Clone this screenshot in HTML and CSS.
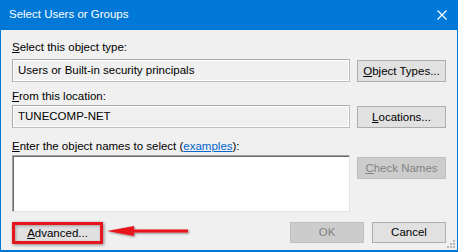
FILE: index.html
```html
<!DOCTYPE html>
<html lang="en">
<head>
    <meta charset="UTF-8">
    <title>Select Users or Groups</title>
    <link rel="stylesheet" href="styles.css">
</head>
<body>
    <div class="dialog">
        <div class="titlebar">
            <span class="title">Select Users or Groups</span>
            <svg class="close-icon" width="10" height="10" viewBox="0 0 10 10">
                <path d="M0.5 0.5 L9.5 9.5 M9.5 0.5 L0.5 9.5" stroke="#fff" stroke-width="1.2" fill="none"/>
            </svg>
        </div>

        <div class="dialog-body">
            <div class="field-label label-type"><u>S</u>elect this object type:</div>
            <div class="field-row">
                <div class="textbox">Users or Built-in security principals</div>
                <button class="btn"><u>O</u>bject Types...</button>
            </div>

            <div class="field-label label-location"><u>F</u>rom this location:</div>
            <div class="field-row">
                <div class="textbox">TUNECOMP-NET</div>
                <button class="btn"><u>L</u>ocations...</button>
            </div>

            <div class="field-label label-names"><u>E</u>nter the object names to select (<a class="link" href="#">examples</a>):</div>
            <div class="field-row">
                <div class="textarea"></div>
                <button class="btn btn-disabled"><u>C</u>heck Names</button>
            </div>

            <div class="footer">
                <button class="btn btn-advanced"><u>A</u>dvanced...</button>
                <div class="footer-right">
                    <button class="btn btn-small btn-disabled">OK</button>
                    <button class="btn btn-small">Cancel</button>
                </div>
            </div>
        </div>

        <!-- annotation arrow pointing at Advanced -->
        <svg class="arrow" width="90" height="16" viewBox="0 0 90 16">
            <defs>
                <filter id="shadow" x="-10%" y="-50%" width="120%" height="200%">
                    <feDropShadow dx="1" dy="1" stdDeviation="1.2" flood-color="#000" flood-opacity="0.45"/>
                </filter>
            </defs>
            <g filter="url(#shadow)">
                <rect x="24" y="6.5" width="58" height="3" fill="#e8141b"/>
                <polygon points="1,8 28,3 28,13" fill="#e8141b"/>
            </g>
        </svg>

        <div class="grip">
            <svg width="8" height="8" viewBox="0 0 8 8">
                <rect x="6" y="0" width="2" height="2" fill="#b8b8b8"/>
                <rect x="3" y="3" width="2" height="2" fill="#b8b8b8"/>
                <rect x="6" y="3" width="2" height="2" fill="#b8b8b8"/>
                <rect x="0" y="6" width="2" height="2" fill="#b8b8b8"/>
                <rect x="3" y="6" width="2" height="2" fill="#b8b8b8"/>
                <rect x="6" y="6" width="2" height="2" fill="#b8b8b8"/>
            </svg>
        </div>
    </div>
</body>
</html>
```

FILE: styles.css
```css
body {
    margin: 0;
    background: #f0f0f0;
    font-family: 'Segoe UI', 'Liberation Sans', Arial, sans-serif;
    font-size: 11.5px;
    color: #000;
}
.dialog {
    position: relative;
    width: 458px;
    height: 252px;
    box-sizing: border-box;
    background: #f0f0f0;
    border: 1px solid #0078d7;
    border-top: none;
    border-bottom-width: 2px;
    display: flex;
    flex-direction: column;
}
.titlebar {
    height: 30px;
    margin: 0 -1px;
    background: #0078d7;
    color: #fff;
    display: flex;
    align-items: center;
    justify-content: space-between;
    padding: 0 11px 0 9px;
    flex-shrink: 0;
}
.title {
    font-size: 11.5px;
    margin-top: -2px;
}
.close-icon {
    margin-top: -1px;
}
.dialog-body {
    padding: 10px 11px 0 11px;
    display: flex;
    flex-direction: column;
}
.field-label {
    height: 15px;
    line-height: 15px;
    white-space: nowrap;
}
.label-type {
    margin-bottom: 4px;
}
.label-location {
    margin-top: 7px;
    margin-bottom: 1px;
}
.label-names {
    margin-top: 11px;
    margin-bottom: 1px;
}
.field-row {
    display: flex;
    gap: 7px;
    align-items: flex-start;
}
.textbox {
    flex: 1;
    height: 23px;
    box-sizing: border-box;
    border: 1px solid #a9a9a9;
    border-right-color: #bcbcbc;
    border-bottom-color: #bcbcbc;
    box-shadow: inset 1px 1px 0 #fff, inset -1px -1px 0 #fff;
    padding: 0 5px;
    line-height: 20px;
    white-space: nowrap;
}
.textarea {
    flex: 1;
    height: 57px;
    box-sizing: border-box;
    background: #fff;
    border: 1px solid;
    border-color: #a0a0a0 #e3e3e3 #e3e3e3 #a0a0a0;
    box-shadow: inset 1px 1px 0 #696969;
}
.btn {
    width: 89px;
    height: 22px;
    margin-top: 1px;
    box-sizing: border-box;
    background: #e1e1e1;
    border: 1px solid #adadad;
    font-family: inherit;
    font-size: 11.5px;
    color: #000;
    padding: 0;
    line-height: 19px;
}
.btn-disabled {
    background: #cccccc;
    border-color: #bfbfbf;
    color: #838383;
    margin-top: 2px;
}
.link {
    color: #0066cc;
}
.footer {
    margin-top: 10px;
    display: flex;
    justify-content: space-between;
    align-items: flex-start;
}
.footer-right {
    display: flex;
    gap: 8px;
}
.btn-small {
    width: 74px;
    margin-top: 0;
    height: 21px;
}
.btn-advanced {
    width: 91px;
    margin-top: 0;
    border: 3px solid #e8141b;
    box-shadow: 1px 1px 3px rgba(0, 0, 0, 0.45), inset 1px 1px 3px rgba(0, 0, 0, 0.3);
    line-height: 15px;
}
.arrow {
    position: absolute;
    left: 105px;
    top: 223px;
}
.grip {
    position: absolute;
    right: 2px;
    bottom: 2px;
    line-height: 0;
}
```
